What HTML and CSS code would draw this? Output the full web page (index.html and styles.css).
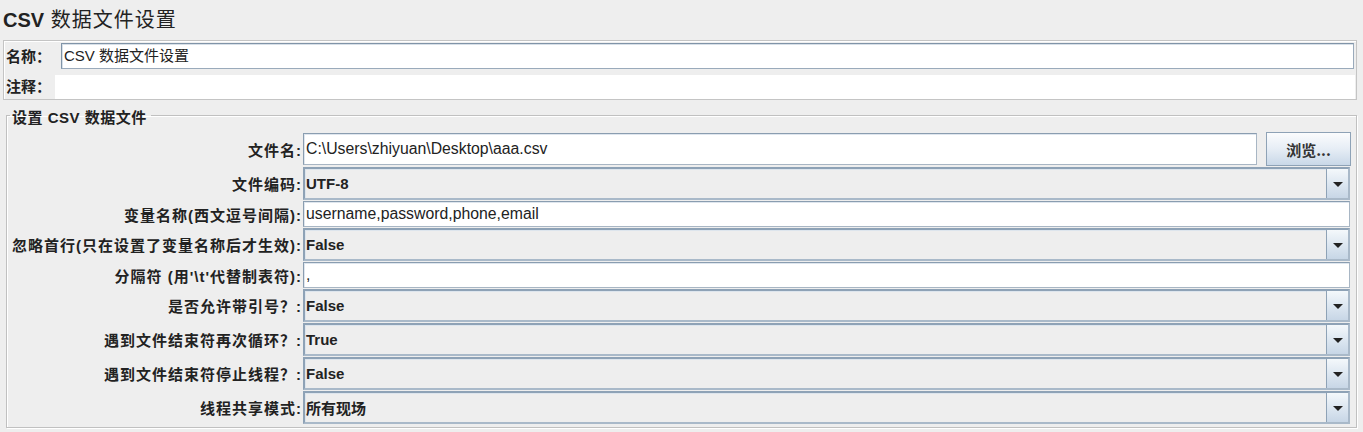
FILE: index.html
```html
<!DOCTYPE html>
<html>
<head>
<meta charset="utf-8">
<link rel="stylesheet" href="styles.css">
</head>
<body>
<div class="page">
  <div class="title"><b>CSV</b> 数据文件设置</div>
  <div class="namebox">
    <div class="nrow">
      <span class="nlabel">名称：</span>
      <div class="nfield">CSV 数据文件设置</div>
    </div>
    <div class="crow">
      <span class="clabel">注释：</span>
      <div class="cfield"></div>
    </div>
  </div>
  <fieldset class="group">
    <legend>设置 CSV 数据文件</legend>
    <div class="grid">
      <label class="lbl">文件名:</label>
      <div class="filerow">
        <div class="tfield big">C:\Users\zhiyuan\Desktop\aaa.csv</div>
        <button class="browse">浏览...</button>
      </div>

      <label class="lbl">文件编码:</label>
      <div class="combo"><span class="cval">UTF-8</span><span class="arrow"></span></div>

      <label class="lbl">变量名称(西文逗号间隔):</label>
      <div class="tfield">username,password,phone,email</div>

      <label class="lbl">忽略首行(只在设置了变量名称后才生效):</label>
      <div class="combo"><span class="cval">False</span><span class="arrow"></span></div>

      <label class="lbl">分隔符 (用'\t'代替制表符):</label>
      <div class="tfield">,</div>

      <label class="lbl">是否允许带引号？:</label>
      <div class="combo"><span class="cval">False</span><span class="arrow"></span></div>

      <label class="lbl">遇到文件结束符再次循环？:</label>
      <div class="combo"><span class="cval">True</span><span class="arrow"></span></div>

      <label class="lbl">遇到文件结束符停止线程？:</label>
      <div class="combo"><span class="cval">False</span><span class="arrow"></span></div>

      <label class="lbl">线程共享模式:</label>
      <div class="combo"><span class="cval">所有现场</span><span class="arrow"></span></div>
    </div>
  </fieldset>
</div>
</body>
</html>
```
FILE: styles.css
```css
* { box-sizing: border-box; }
html, body {
  margin: 0;
  padding: 0;
  background: #eeeeee;
  font-family: "Liberation Sans", "Noto Sans CJK SC", sans-serif;
  color: #333333;
}
.page {
  width: 1363px;
  height: 432px;
  overflow: hidden;
}
.title {
  height: 40px;
  padding: 6px 0 0 3px;
  font-size: 20px;
  letter-spacing: 1px;
  color: #222;
  line-height: 28px;
}
.title b { font-weight: bold; letter-spacing: 0; }

.namebox {
  margin: 0 6px 0 3px;
  height: 60px;
  border: 1px solid #c4c4c4;
  box-shadow: inset 1px 1px 0 #ffffff;
  padding: 1px;
}
.nrow {
  display: flex;
  align-items: center;
  height: 27px;
}
.nlabel, .clabel {
  font-size: 15px;
  font-weight: bold;
  color: #222;
  padding-left: 1px;
  white-space: nowrap;
}
.nlabel { width: 56px; }
.nfield {
  flex: 1;
  height: 26px;
  margin-right: 1px;
  background: #fff;
  border: 1px solid #9aaabb;
  border-top-color: #8094a8;
  border-left-color: #8094a8;
  box-shadow: inset 1px 1px 0 #d8e0e8;
  font-size: 15px;
  line-height: 24px;
  padding-left: 2px;
  color: #222;
}
.crow {
  display: flex;
  align-items: stretch;
  height: 24px;
  margin-top: 6px;
}
.clabel { width: 50px; line-height: 24px; }
.cfield {
  flex: 1;
  background: #fff;
}

.group {
  margin: 4px 6px 0 6px;
  padding: 6px 6px 0 0;
  height: 324px;
  border: 1px solid #c0c0c0;
  box-shadow: inset 1px 1px 0 #ffffff, 1px 1px 0 #ffffff;
}
.group legend {
  margin-left: 3px;
  padding: 6px 4px 0 2px;
  font-size: 15px;
  font-weight: bold;
  color: #222;
  line-height: 16px;
  letter-spacing: 0.5px;
}
.grid {
  display: grid;
  grid-template-columns: 294px 1fr;
  column-gap: 2px;
  row-gap: 1px;
  grid-template-rows: 34px 33px 26px 33px 26px 33px 33px 33px 33px;
}
.lbl {
  font-size: 15px;
  font-weight: bold;
  color: #222;
  text-align: right;
  display: flex;
  align-items: center;
  justify-content: flex-end;
  white-space: nowrap;
  letter-spacing: 1px;
  margin-right: -1px;
}
.filerow {
  display: flex;
  gap: 9px;
  align-items: stretch;
}
.tfield {
  background: #fff;
  border: 1px solid #a8b6c4;
  border-top-color: #8a9db0;
  border-left-color: #8a9db0;
  box-shadow: inset 1px 1px 0 #dfe6ee;
  font-size: 15.8px;
  color: #222;
  padding-left: 2px;
  display: flex;
  align-items: center;
  white-space: nowrap;
}
.tfield.big { flex: 1; margin: 1px 0; }
.browse {
  width: 85px;
  margin: 0 -1px 0 0;
  border: 1px solid #8ea2b6;
  border-radius: 0;
  background: linear-gradient(#fbfcfd, #e6edf5 50%, #c9d8e8);
  font-family: "Noto Sans CJK SC", "Liberation Sans", sans-serif;
  font-size: 15px;
  font-weight: bold;
  color: #333;
  padding: 0;
}
.combo {
  display: flex;
  align-items: stretch;
  background: #eeeeee;
  border: 2px solid #a9b9c9;
  border-top-color: #8ea2b6;
  border-left-color: #8ea2b6;
  box-shadow: inset 1px 1px 0 #dde5ed;
}
.cval {
  flex: 1;
  font-size: 15px;
  font-weight: bold;
  color: #222;
  display: flex;
  align-items: center;
  padding-left: 1px;
}
.arrow {
  width: 22px;
  background: linear-gradient(#f4f8fb, #dde7f1 50%, #c7d6e6);
  border-left: 1px solid #8ea2b6;
  position: relative;
}
.arrow::after {
  content: "";
  position: absolute;
  left: 6px;
  top: 50%;
  margin-top: -2px;
  border-left: 5px solid transparent;
  border-right: 5px solid transparent;
  border-top: 5px solid #222;
}
```
